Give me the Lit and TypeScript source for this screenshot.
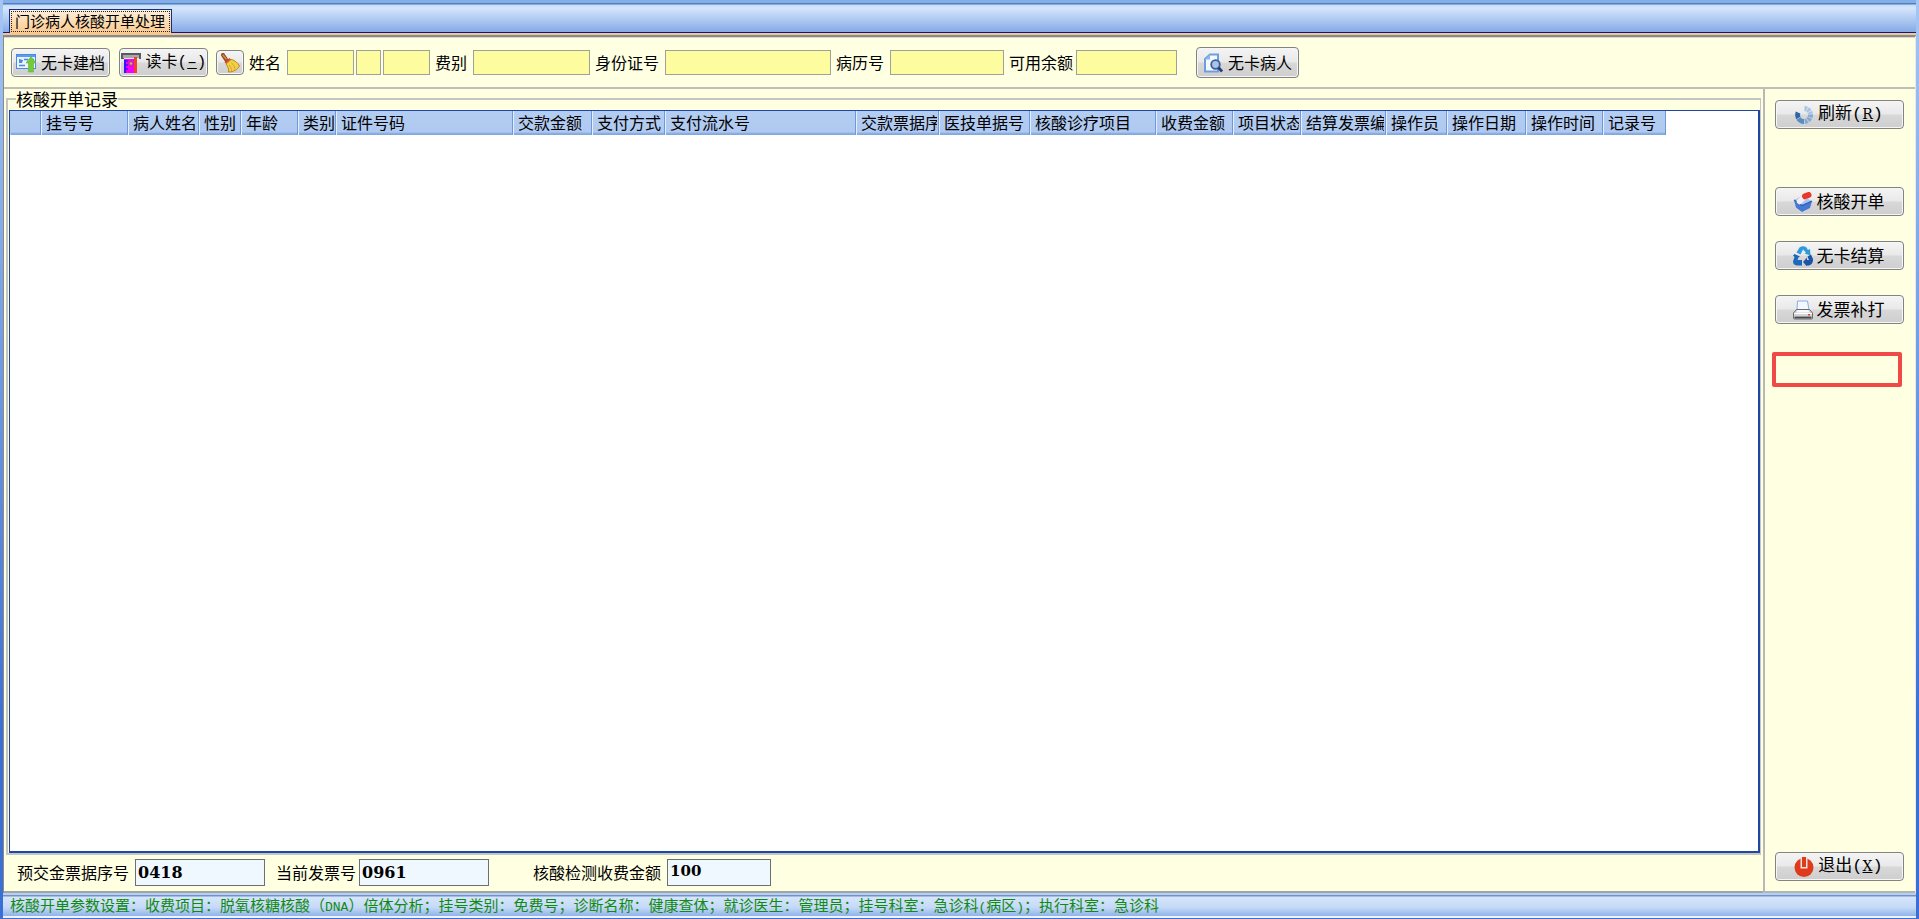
import { LitElement, html, css, svg } from "lit";
import { customElement } from "lit/decorators.js";
import { styleMap } from "lit/directives/style-map.js";

const icons = {
  addFile: svg`<svg viewBox="0 0 20 20" width="20" height="20" aria-hidden="true">
    <rect x="0.5" y="1.5" width="19" height="14" fill="#eaf3ff" stroke="#4a8ae6"/>
    <path d="M1 2h18v2H1z" fill="#5b9bf0"/>
    <path d="M3 6l4 1-1 3H3z" fill="#4a8ae6"/>
    <path d="M8 6.500h4M16 6.500h2M3 12.500h6" stroke="#4a8ae6" stroke-width="1.500"/>
    <path d="M15 3.500l5 6.500h-2.500v9h-5v-9H10z" fill="#74c93c" stroke="#5fb52f" stroke-width=".6"/></svg>`,
  card: svg`<svg viewBox="0 0 20 20" width="20" height="20" aria-hidden="true">
    <path d="M0 0h20v6h-2V3H3v3H0z" fill="#555b60"/><path d="M2 2h16v3H2z" fill="#a9aaa6"/>
    <rect x="3" y="6" width="11" height="14" fill="#f400f4"/><path d="M13 4h3v16h-3z" fill="#f0402a"/>
    <path d="M4 7v13" stroke="#3a12ff" stroke-width="2"/><path d="M4 8h3M4 12h3M4 16h3" stroke="#3a12ff" stroke-width="1.500"/>
    <circle cx="10" cy="10.500" r="1.800" fill="#e6a06a" stroke="#8a5a50"/></svg>`,
  broom: svg`<svg viewBox="0 0 22 20" width="22" height="20" aria-hidden="true">
    <path d="M4 2l4 6" stroke="#8a4a20" stroke-width="4" stroke-linecap="round"/>
    <path d="M4 2l3 4" stroke="#d98a45" stroke-width="1.500" stroke-linecap="round"/>
    <path d="M5.500 9l5-4 2.500 2.500-5 4.500z" fill="#e0452c"/>
    <path d="M7 11l5-4.500c4 .5 6.500 3.500 8.500 6.500-2 3.500-6 6-11 6 .5-3-.5-5.500-2.500-8z" fill="#f3cf46" stroke="#b98a1e"/>
    <path d="M10 12c2 2 2.500 4 2.500 6M12.500 10c2 1.500 3 3.500 3.500 6" fill="none" stroke="#d3a52b"/></svg>`,
  search: svg`<svg viewBox="0 0 20 20" width="20" height="20" aria-hidden="true">
    <path d="M2 6l5-4.500h8v17H2z" fill="#f4f9ff" stroke="#6d9fe0" stroke-width="2"/>
    <path d="M1.500 6.500h5.500v-5z" fill="#8db6ec"/>
    <circle cx="12.500" cy="11.500" r="4.300" fill="#a9c4ea" stroke="#3f5f94" stroke-width="1.800"/>
    <path d="M15.500 14.500l3.500 4" stroke="#2b3f74" stroke-width="2.800"/></svg>`,
  refresh: svg`<svg viewBox="0 0 20 20" width="20" height="20" aria-hidden="true" fill="none" stroke-width="5">
    <path d="M10.500 3.500a6.500 6.500 0 0 1 6 5.500" stroke="#a9c4e4" stroke-dasharray="2.500 .7"/>
    <path d="M16.500 9.500a6.500 6.500 0 0 1-6 7" stroke="#86aad6" stroke-dasharray="2.800 .7"/>
    <path d="M10 16.500a6.500 6.500 0 0 1-5.500-3" stroke="#5c8cc4"/>
    <path d="M4.300 13a6.500 6.500 0 0 1-.3-5.500" stroke="#2f66a6"/></svg>`,
  pill: svg`<svg viewBox="0 0 20 20" width="20" height="20" aria-hidden="true">
    <path d="M1 8l8 5.500 10-4.500-2 7-8 4-6-4.500z" fill="#4478d4"/>
    <path d="M1 8l8-4 10 5-10 4.500z" fill="#a8c4f4"/>
    <path d="M1 8l8 5.500 10-4.500" fill="none" stroke="#2c59b0" stroke-width="1.200"/>
    <path d="M6.500 9.500L12 4.500" stroke="#f2edf3" stroke-width="5.500" stroke-linecap="round"/>
    <path d="M12 4.300l3.500-1.300" stroke="#e8382c" stroke-width="6" stroke-linecap="round"/></svg>`,
  recycle: svg`<svg viewBox="0 0 20 20" width="20" height="20" aria-hidden="true">
    <path d="M3.500 6.500L6.500 1.500Q10-1 13.500 1.500L15 4l2-1 .5 6.500-6-2 1.500-1-3-3L7.500 8.500z" fill="#2b9bdc"/>
    <path d="M1.500 8l5.500 2.500-1.500 1-1 2.500H9v5.500H5Q0 19.500 0 15.500l1.500-4.500L0 9.500z" fill="#1d68bc"/>
    <path d="M14.500 10.500l3.500-2 2 4.500Q20.500 18 16 19.500h-2V20.500l-4-4.500 4-4.500v2.500h2z" fill="#1a55a8"/></svg>`,
  printer: svg`<svg viewBox="0 0 20 20" width="20" height="20" aria-hidden="true">
    <path d="M4.500 1h10l1.500 9h-12z" fill="#f2f8ff" stroke="#86aee6"/>
    <path d="M3.500 9.500h13l3 3.500v5q0 1-1 1h-17q-1 0-1-1v-5z" fill="#d3d3d6" stroke="#6a6c70"/>
    <path d="M4.500 10h11l1 2.500h-13z" fill="#fafafa"/><path d="M1 13.500h18" stroke="#fff"/>
    <path d="M1.500 17.500h17" stroke="#46494e" stroke-width="1.800"/><rect x="15" y="14" width="2" height="1.500" fill="#e8402c"/></svg>`,
  power: svg`<svg viewBox="0 0 20 20" width="20" height="20" aria-hidden="true">
    <circle cx="10" cy="10.500" r="9.500" fill="#df3a1c"/>
    <path d="M6.500 0h7v11.500h-7z" fill="#f0e2dc"/><path d="M8 0h4v10H8z" fill="#df3a1c"/></svg>`,
};

const columns: [string, number][] = [
  ["", 31], ["挂号号", 87], ["病人姓名", 71], ["性别", 42], ["年龄", 57], ["类别", 38],
  ["证件号码", 177], ["交款金额", 79], ["支付方式", 73], ["支付流水号", 191],
  ["交款票据序号", 83], ["医技单据号", 91], ["核酸诊疗项目", 126], ["收费金额", 77],
  ["项目状态", 68], ["结算发票编号", 85], ["操作员", 61], ["操作日期", 79],
  ["操作时间", 77], ["记录号", 63],
];

const fields: [string, string, number[]][] = [
  ["name", "姓名", [67, 25, 47]],
  ["fee", "费别", [117]],
  ["idno", "身份证号", [166]],
  ["record", "病历号", [114]],
  ["balance", "可用余额", [101]],
];

@customElement("app-root")
export class AppRoot extends LitElement {
  static styles = css`
    :host {
      display: flex;
      flex-direction: column;
      height: 100vh;
      box-sizing: border-box;
      border: solid #3a6fd6;
      border-width: 0 3px 1px;
      border-image: linear-gradient(#a5c6f4, #3a6fd6 80%) 1;
      background: #ffffe1;
      color: #000;
      font-family: "Noto Sans CJK SC", sans-serif;
      font-size: 16px;
      line-height: 20px;
      overflow: hidden;
    }
    * { box-sizing: border-box; }
    svg { flex: none; display: block; }
    .tabs {
      flex: none;
      display: flex;
      align-items: flex-end;
      height: 33px;
      padding-left: 6px;
      border-top: 3px solid #86aee6;
      border-bottom: 1px solid #0c1a86;
      background: linear-gradient(#4f7fc4 0 1px, #c6dbf7 2px, #d5e6fc 5px, #86aae6);
    }
    .tab {
      height: 24px;
      margin: 0 0 -1px;
      padding: 1px;
      border: 1px solid #10308c;
      border-bottom: 0;
      background: linear-gradient(#fdf0dc, #fcc98c);
      font: inherit;
      font-size: 15px;
      line-height: 18px;
    }
    .tab-text {
      display: block;
      border: 1px dotted #222;
      padding: 0 4px 1px 3px;
    }
    .page {
      flex: 1;
      min-height: 0;
      display: flex;
      flex-direction: column;
      border-top: 2px solid #f6c690;
    }
    .frame {
      flex: 1;
      min-height: 0;
      display: flex;
      flex-direction: column;
      border: solid #8a8a86;
      border-width: 2px 1px 0;
      border-right-color: #e8e8f0;
    }
    .toolbar {
      flex: none;
      display: flex;
      align-items: center;
      gap: 5px;
      height: 52px;
      padding: 0 0 0 7px;
      border-top: 1px solid #d8d8cc;
      border-bottom: 2px solid #bfbfb8;
    }
    .btn {
      display: flex;
      align-items: center;
      justify-content: center;
      gap: 5px;
      height: 29px;
      padding: 0;
      border: 1px solid #828282;
      border-radius: 4px;
      background: linear-gradient(#f4f4f4, #e9e9e9 48%, #d8d8d8 52%, #cecece);
      box-shadow: inset 0 0 0 1px #f6f6f6;
      color: #000;
      font: inherit;
      white-space: nowrap;
    }
    .btn span, label { padding-bottom: 2px; }
    .w-create { width: 99px; margin-right: 4px; }
    .w-read { width: 89px; margin-right: 3px; }
    .w-clear { width: 28px; height: 25px; }
    .w-none { width: 103px; height: 31px; margin-left: 14px; }
    .half { font-family: "Liberation Mono", monospace; }
    .key { font-family: "DejaVu Serif", serif; font-size: 14px; text-decoration: underline; }
    .field { display: flex; align-items: center; gap: 6px; white-space: nowrap; }
    .field:last-of-type { gap: 3px; }
    .boxes { display: flex; gap: 2px; }
    input { font: inherit; border-radius: 0; outline: 0; }
    .yellow { height: 25px; padding: 0 3px; border: 1px solid #a0a09c; background: #fdfda0; }
    .body { flex: 1; min-height: 0; display: flex; }
    .main { flex: 1; min-width: 0; display: flex; flex-direction: column; border-right: 2px solid #b8b8b8; }
    .group {
      flex: 1;
      min-height: 0;
      min-width: 0;
      display: flex;
      margin: 0 2px 0 2px;
      padding: 2px 0 0 1px;
      border: 2px solid #c4c4c0;
      border-width: 2px 1px 2px 2px;
    }
    .group-title { margin-left: 7px; padding: 0; font-size: 17px; line-height: 19px; }
    .grid {
      flex: 1;
      min-width: 0;
      overflow: hidden;
      background: #fff;
      border: 1px solid #1d46a8;
      border-right-width: 2px;
      border-bottom-width: 2px;
    }
    table { table-layout: fixed; border-collapse: separate; border-spacing: 0; }
    th {
      height: 24px;
      padding: 0 1px 2px 4px;
      text-align: left;
      font-weight: 400;
      line-height: 20px;
      background: linear-gradient(#b4cdf2, #afc9f0 88%, #8db0e6 92%, #7ea5e0);
      border-left: 1px solid #e4eefc;
      border-right: 1px solid #6f98d8;
    }
    th:first-child { border-left-color: #afc9f0; }
    .cell { display: block; overflow-x: clip; overflow-y: visible; white-space: nowrap; }
    .totals {
      flex: none;
      display: flex;
      align-items: center;
      height: 38px;
      padding: 0 0 1px 13px;
      border-bottom: 2px solid #a4a4a0;
      white-space: nowrap;
    }
    .total { display: flex; align-items: center; gap: 6px; margin-right: 11px; }
    .total.tight { gap: 3px; margin-right: 44px; }
    .pale {
      width: 130px;
      height: 27px;
      padding: 0 2px;
      border: 1px solid #6c6f74;
      background: #f0f8ff;
      font-family: "DejaVu Serif", serif;
      font-size: 16px;
      font-weight: 700;
    }
    .pale.short { width: 104px; padding-bottom: 3px; font-size: 15px; }
    .side {
      flex: none;
      display: flex;
      flex-direction: column;
      width: 150px;
      padding: 11px 11px 10px 10px;
      border-bottom: 2px solid #b4b4b0;
    }
    .side .btn { width: 129px; flex: none; font-size: 17px; gap: 4px; padding-right: 2px; margin-bottom: 25px; }
    .side .first { margin-bottom: 58px; }
    .side .last { margin: auto 0 0; }
    .slot { flex: none; width: 130px; height: 35px; margin: 3px 0 0 -3px; border: 4px solid #f04a48; border-radius: 2px; }
    .status {
      flex: none;
      height: 25px;
      padding: 0 0 0 7px;
      border-bottom: 2px solid #eef4fc;
      border-top: 1px solid #b9cff0;
      background: linear-gradient(#b9cff0 0 1px, #6d93cf 1px 2px, #d6e5fb 3px, #c5daf8 60%, #90b3e8);
      color: #118a11;
      font-size: 15px;
      line-height: 22px;
      white-space: nowrap;
      overflow: hidden;
    }
    .latin { font-family: "Liberation Mono", monospace; font-size: 13px; }
  `;

  render() {
    return html`
      <nav class="tabs" role="tablist">
        <button class="tab" role="tab" aria-selected="true"><span class="tab-text">门诊病人核酸开单处理</span></button>
      </nav>
      <div class="page">
        <div class="frame">
          <div class="toolbar">
            <button class="btn w-create">${icons.addFile}<span>无卡建档</span></button>
            <button class="btn w-read">${icons.card}<span>读卡<span class="half">(<u>–</u>)</span></span></button>
            <button class="btn w-clear" aria-label="清除">${icons.broom}</button>
            ${fields.map(([id, label, widths]) => html`
              <div class="field">
                <label for=${id}>${label}</label>
                <div class="boxes">
                  ${widths.map((w, i) => html`<input class="yellow" id=${i ? `${id}${i}` : id} aria-label=${label} style=${styleMap({ width: `${w}px` })}>`)}
                </div>
              </div>`)}
            <button class="btn w-none">${icons.search}<span>无卡病人</span></button>
          </div>
          <div class="body">
            <main class="main">
              <fieldset class="group">
                <legend class="group-title">核酸开单记录</legend>
                <div class="grid">
                  <table style=${styleMap({ width: `${columns.reduce((sum, c) => sum + c[1], 0)}px` })}>
                    <colgroup>${columns.map(([, w]) => html`<col style=${styleMap({ width: `${w}px` })}>`)}</colgroup>
                    <thead><tr>${columns.map(([name]) => html`<th scope="col"><span class="cell">${name}</span></th>`)}</tr></thead>
                  </table>
                </div>
              </fieldset>
              <div class="totals">
                <div class="total"><label for="deposit">预交金票据序号</label><input class="pale" id="deposit" value="0418"></div>
                <div class="total tight"><label for="invoice">当前发票号</label><input class="pale" id="invoice" value="0961"></div>
                <div class="total"><label for="amount">核酸检测收费金额</label><input class="pale short" id="amount" value="100"></div>
              </div>
            </main>
            <aside class="side">
              <button class="btn first">${icons.refresh}<span>刷新<span class="half">(</span><span class="key">R</span><span class="half">)</span></span></button>
              <button class="btn">${icons.pill}<span>核酸开单</span></button>
              <button class="btn">${icons.recycle}<span>无卡结算</span></button>
              <button class="btn">${icons.printer}<span>发票补打</span></button>
              <div class="slot"></div>
              <button class="btn last">${icons.power}<span>退出<span class="half">(</span><span class="key">X</span><span class="half">)</span></span></button>
            </aside>
          </div>
        </div>
      </div>
      <footer class="status">核酸开单参数设置：收费项目：脱氧核糖核酸（<span class="latin">DNA</span>）倍体分析；挂号类别：免费号；诊断名称：健康查体；就诊医生：管理员；挂号科室：急诊科<span class="latin">(</span>病区<span class="latin">)</span>；执行科室：急诊科</footer>
    `;
  }
}
